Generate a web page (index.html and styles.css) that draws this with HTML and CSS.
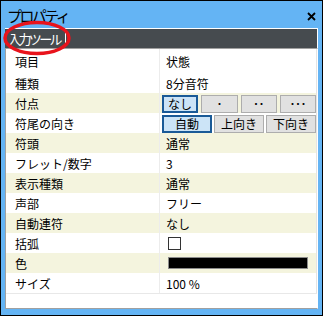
FILE: index.html
```html
<!DOCTYPE html>
<html lang="ja">
<head>
    <meta charset="UTF-8">
    <title>プロパティ</title>
    <link rel="stylesheet" href="styles.css">
</head>
<body>
    <div class="window">
        <div class="title-bar">
            <span class="title">プロパティ</span>
            <svg class="close" width="9" height="9" viewBox="0 0 9 9">
                <path d="M1 1 L8 8 M8 1 L1 8" stroke="#000" stroke-width="1.8"/>
            </svg>
        </div>

        <div class="tool-input">
            <span class="tool-text">入力ツール</span><span class="caret"></span>
        </div>

        <div class="panel">
            <div class="row header">
                <div class="label">項目</div>
                <div class="value">状態</div>
            </div>
            <div class="row">
                <div class="label">種類</div>
                <div class="value">8分音符</div>
            </div>
            <div class="row alt">
                <div class="label">付点</div>
                <div class="value buttons four">
                    <button class="toggle selected">なし</button>
                    <button class="toggle dots">･</button>
                    <button class="toggle dots">･･</button>
                    <button class="toggle dots">･･･</button>
                </div>
            </div>
            <div class="row">
                <div class="label">符尾の向き</div>
                <div class="value buttons three">
                    <button class="toggle selected">自動</button>
                    <button class="toggle">上向き</button>
                    <button class="toggle">下向き</button>
                </div>
            </div>
            <div class="row alt">
                <div class="label">符頭</div>
                <div class="value">通常</div>
            </div>
            <div class="row">
                <div class="label">フレット/数字</div>
                <div class="value">3</div>
            </div>
            <div class="row alt">
                <div class="label">表示種類</div>
                <div class="value">通常</div>
            </div>
            <div class="row">
                <div class="label">声部</div>
                <div class="value">フリー</div>
            </div>
            <div class="row alt">
                <div class="label">自動連符</div>
                <div class="value">なし</div>
            </div>
            <div class="row">
                <div class="label">括弧</div>
                <div class="value"><span class="checkbox"></span></div>
            </div>
            <div class="row alt">
                <div class="label">色</div>
                <div class="value"><span class="color-bar"></span></div>
            </div>
            <div class="row last">
                <div class="label">サイズ</div>
                <div class="value">100 %</div>
            </div>
        </div>

        <svg class="highlight" width="72" height="38" viewBox="0 0 72 38">
            <ellipse cx="35" cy="18" rx="32" ry="15.5" fill="none" stroke="#e8131c" stroke-width="3.5"/>
        </svg>
    </div>
</body>
</html>
```

FILE: styles.css
```css
body {
    margin: 0;
    font-family: "Noto Sans CJK JP", "Noto Sans", sans-serif;
    font-size: 12px;
    color: #000;
}

.window {
    position: relative;
    box-sizing: border-box;
    width: 323px;
    height: 316px;
    border: 1px solid #000;
    background: #64b4f4;
    padding: 0 4px 6px 4px;
    display: flex;
    flex-direction: column;
}

.title-bar {
    height: 27px;
    display: flex;
    align-items: center;
    justify-content: space-between;
    margin: 0 -4px;
    padding: 0 6px 0 6px;
}

.title {
    font-size: 15px;
    letter-spacing: -2.6px;
    color: #000;
    margin-top: 1px;
}

.close {
    margin-top: 3px;
}

.tool-input {
    box-sizing: border-box;
    height: 20px;
    background: #464b4f;
    border-top: 1px solid #fff;
    border-right: 1px solid #fff;
    display: flex;
    align-items: center;
    padding-left: 3px;
    color: #fff;
}

.tool-text {
    font-size: 13px;
    letter-spacing: -2.6px;
}

.caret {
    width: 1px;
    height: 13px;
    background: #fff;
    margin-left: 5px;
}

.panel {
    flex: 1;
    background: #fff;
    border-top: 1px solid #a0a0a0;
    border-left: 1px solid #a0a0a0;
    border-bottom: 1px solid #a0a0a0;
    border-right: 1px solid #fff;
}

.row {
    display: flex;
    height: 20px;
    border-right: 1px solid #e4e4e4;
}

.row.header {
    height: 24px;
}

.row.alt {
    background: #f4f4de;
}

.row.last {
    border-bottom: 1px solid #e8e8e8;
}

.label {
    width: 154px;
    border-right: 1px solid #ececec;
    padding-left: 9px;
    box-sizing: border-box;
    display: flex;
    align-items: center;
}

.value {
    flex: 1;
    padding-left: 6px;
    display: flex;
    align-items: center;
}

.buttons {
    display: grid;
    padding: 2px 0 1px 2px;
    align-items: stretch;
}

.buttons.four {
    grid-template-columns: repeat(4, 1fr);
    gap: 3px;
}

.buttons.three {
    grid-template-columns: repeat(3, 1fr);
    gap: 2px;
}

.toggle {
    font-family: inherit;
    font-size: 12px;
    padding: 0;
    margin: 0;
    background: #e1e1e1;
    border: 1px solid #adadad;
    color: #000;
    line-height: 14px;
}

.toggle.selected {
    background: #cce4f7;
    border: 2px solid #1a5a97;
}

.toggle.dots {
    letter-spacing: -0.5px;
}

.checkbox {
    width: 11px;
    height: 11px;
    border: 1px solid #333;
    background: #fff;
    margin-left: 2px;
}

.color-bar {
    width: 138px;
    height: 10px;
    background: #000;
    border: 1px solid #8c8c8c;
    margin-left: 2px;
}

.highlight {
    position: absolute;
    left: 1px;
    top: 19px;
}
```
